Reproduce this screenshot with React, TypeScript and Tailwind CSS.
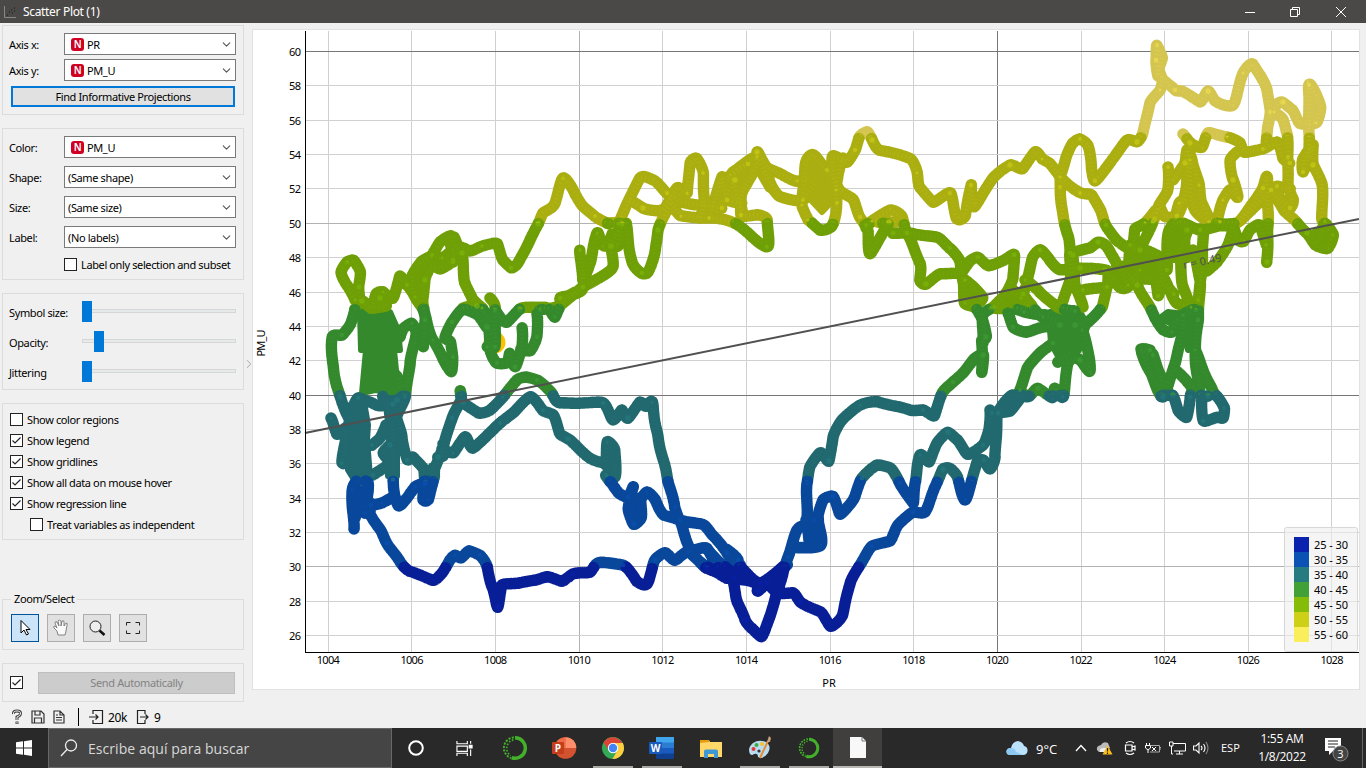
import React from "react";
import { ChevronDown, ChevronRight } from "lucide-react";

const X = (v: number) => 328.3 + (v - 1004) * 41.82;
const Y = (v: number) => 51.5 + (60 - v) * 17.18;

const BANDS = [
  { top: 60, fill: "#d3c550", light: "#f3e24f" },
  { top: 55, fill: "#aaae10", light: "#cdd016" },
  { top: 50, fill: "#6f9f06", light: "#7fb80a" },
  { top: 45, fill: "#35892d", light: "#3f9f36" },
  { top: 40, fill: "#21696e", light: "#257b80" },
  { top: 35, fill: "#08479a", light: "#0a52b4" },
  { top: 30, fill: "#081e96", light: "#0a22ae" },
];

const LEGEND = [
  ["25 - 30", "#0a22ae"],
  ["30 - 35", "#0a52b4"],
  ["35 - 40", "#257b80"],
  ["40 - 45", "#41a036"],
  ["45 - 50", "#84bc08"],
  ["50 - 55", "#cdd016"],
  ["55 - 60", "#fbee5c"],
];

const TRACKS = [
  "355,300 347,285 341,272 347,262 354,260 360,272 359,287 360,303",
  "355,300 362,301 372,308 376,294 383,292 393,298 400,276 407,285 415,297 422,307 425,320 423,347",
  "375,308 386,306 380,298",
  "415,297 412,277 421,262 432,255 440,242 452,236 453,260 440,269 431,266 425,280 423,300 426,320 433,340 443,358 451,372 453,357 450,342 445,338 452,322 463,309 477,315 487,327",
  "431,257 442,258 458,247 470,251 482,246 497,244 503,260 511,268 518,263 530,240 538,224 543,213 554,205 563,178 575,193 583,207 595,216 608,224",
  "454,237 458,250 453,262",
  "462,253 465,283 472,298 482,308 489,327 490,350 497,363 507,363 510,353 515,367 522,347 522,328",
  "463,308 477,306 492,320 495,346 487,347",
  "490,298 495,308 495,347",
  "495,310 500,318 507,322 520,309 533,307 547,308 555,317 563,300 575,292",
  "537,314 537,337 530,351 521,349",
  "355,309 350,325 342,335 332,337 333,367 340,397 350,420",
  "331,418 337,434 347,428 342,463 350,460",
  "350,412 358,398 370,402 378,406 393,404",
  "400,337 403,329 412,323 416,333 410,363 405,397 397,417 402,437 407,460 413,457 423,468 425,483 433,468 434,478 428,500 423,500 424,484 415,487 407,498 398,506 393,480 393,420 383,396",
  "397,400 403,395 397,376",
  "393,497 382,503 372,505",
  "386,425 380,438 372,445",
  "373,475 390,463 383,453 390,445",
  "354,529 352,490 358,480 368,483 365,513",
  "355,518 361,495 371,505 370,513 380,530 387,543 400,562 410,571 433,580 442,573 450,560 455,555 461,558 469,551 480,555 487,567 492,587 498,607 502,585 520,583 535,580 547,577 562,581 573,574 590,572 598,563 623,565 637,581 647,584 655,560 665,553 675,560 688,552 707,567 727,578",
  "425,484 433,473 443,447 452,418 461,400 460,391 463,402 478,413 490,410 503,397 517,380 527,377 537,380 552,393 560,403 603,403 613,420 622,410 628,418 640,402 646,406 652,402 657,433 668,480 675,507 682,527 692,553 707,568 727,577 757,583 758,591 773,577 787,565",
  "442,449 453,453 465,437 473,448 500,423 513,413 530,397 543,410 553,415 560,433 568,439 593,460 606,462 607,442 615,450 615,477 606,475 610,482 618,492 628,497 633,487 628,510 634,524 641,518 641,500 647,492 655,500 664,515 680,520 703,525 713,535 727,553 740,565",
  "443,444 443,456 438,457",
  "688,552 707,548 717,567 735,577 725,567 708,551",
  "726,549 738,560 742,578 757,583",
  "732,577 737,600 745,620 752,628 761,637 767,625 777,593 783,573 788,557 797,530 803,526",
  "767,583 777,593 793,593 800,602 820,612 831,626 842,616 850,583 860,565 872,546 890,541 898,525 913,512 925,512 935,487 943,469 950,468 957,477 965,500 972,480 977,462 984,460 990,469 995,457 998,413 1012,395 1028,397 1038,388 1052,398 1055,388 1063,397 1068,360",
  "735,562 760,583 785,565",
  "990,410 989,430 983,445 968,454 957,440 948,432 937,443 929,462 920,455 915,483 913,503 900,483 890,468 877,465 862,478 853,500 840,514 833,496 823,500 818,517 821,545 797,548",
  "992,413 1010,411 1023,394",
  "807,517 807,483 810,467 820,453 829,461 833,437 842,420 860,405 878,402 910,410 923,410 934,416 942,393 953,382 963,373 975,358 983,355 982,372 982,340",
  "806,520 810,543 814,520 820,545",
  "1020,390 1028,367 1040,353 1053,343",
  "983,340 986,337 983,320 975,308 965,303 963,283 960,262 950,248 938,238 915,234 893,233",
  "983,343 983,315 992,308",
  "808,220 820,230 832,226 837,203 832,157 847,162 855,150 860,136 867,132 872,140 880,150 910,158 917,173 920,187 933,202 950,193 957,219 965,216 971,185 974,207 993,178 1010,165 1022,169 1035,152 1042,159 1050,163 1060,177 1080,193 1092,195 1100,210 1106,225 1115,239 1127,247 1140,250",
  "808,220 802,205 806,162 813,155 827,170 840,190 853,200 860,217 868,232 870,254 889,222",
  "843,158 840,165 836,190",
  "866,225 890,210 902,217 907,233 920,263 920,280 926,284 940,274 960,273",
  "866,228 872,221 883,223 896,222",
  "962,272 970,261 978,257 988,266 1004,260 1014,255 1013,278 1005,295 993,308 1007,308 1030,308 1021,298 1010,290",
  "965,280 983,297 975,305",
  "1008,313 1013,327 1027,332 1043,327 1060,325",
  "1020,303 1033,308 1043,317 1058,320",
  "540,310 553,308 563,303 583,287 601,277 613,267 611,246 620,230 603,245 597,233 590,263 583,280 580,250",
  "563,303 560,298 582,290 583,260",
  "604,246 618,246 622,224 608,223",
  "618,224 640,178 653,180 667,193 680,202 700,205 722,208",
  "630,200 643,208 663,210 677,188 687,193 690,163 697,158 703,173 704,205 700,218",
  "626,223 632,263 642,273 648,272 655,253 658,230 667,210 671,202 681,216 710,218 733,222 767,247 767,220 757,215 741,215 742,193 757,165 757,152 767,167 780,174 797,181 810,178",
  "709,218 715,200 722,177 727,200 742,203",
  "717,212 735,180 728,178 740,167 757,157 770,182 780,197 803,200 815,182",
  "742,210 731,175 748,164",
  "1105,270 1120,287 1128,287 1140,270",
  "1060,177 1060,187 1063,217 1068,235 1070,253 1070,280 1060,308",
  "1083,307 1075,283 1073,255",
  "1060,177 1066,158 1072,144 1080,139 1088,145 1092,170 1095,181 1107,167 1127,140 1137,142 1143,133 1150,103 1160,90 1162,78 1156,60 1157,45 1162,58 1158,74 1175,90 1183,91 1200,102 1208,91 1215,101 1233,105 1243,73 1253,64 1267,90 1270,112 1268,127 1266,142",
  "1157,46 1156,60 1158,76",
  "1270,115 1277,104 1283,102 1292,110 1300,123 1316,123 1321,107 1316,95 1309,85 1309,140 1309,155 1303,172 1303,159 1313,145 1313,165 1322,183 1322,220",
  "1274,112 1283,120 1287,133 1288,157 1288,183 1293,200 1290,208 1279,196",
  "1183,134 1190,143 1202,147 1208,133 1227,137 1240,143 1245,152 1263,149 1277,142 1283,158 1290,163",
  "1237,152 1230,160 1233,180 1238,197 1230,190 1223,200 1216,224",
  "1168,167 1168,190 1159,205 1153,222 1143,243",
  "1173,180 1185,163 1187,150 1192,160 1199,185 1202,203 1209,218 1220,222",
  "1190,143 1185,195 1177,216 1165,216 1159,207 1154,220",
  "1190,160 1190,197 1196,211 1209,222 1237,223 1253,203 1263,188 1267,177 1268,227 1267,262",
  "1186,200 1179,203 1175,220",
  "1240,221 1270,192 1277,186 1290,189",
  "1271,190 1285,211 1297,223 1307,233 1315,245 1328,248 1333,235 1325,223 1317,243",
  "1012,308 1024,312 1045,315",
  "1027,280 1033,257 1040,250 1050,260 1060,270 1080,268 1107,270",
  "1025,280 1040,292 1057,307 1075,311",
  "1027,285 1023,294 1032,305",
  "1078,251 1090,248 1098,242 1105,245 1120,268 1128,285",
  "1083,290 1107,287",
  "1108,275 1107,287 1102,307 1088,322 1075,325",
  "1133,245 1135,229 1145,223 1155,211",
  "1130,245 1157,255 1162,276 1158,296 1155,280 1130,280",
  "1128,275 1137,285 1150,308 1163,330 1172,332 1178,318",
  "1163,277 1177,303 1196,310",
  "1167,270 1168,233 1176,222 1187,230 1180,253 1183,287 1191,307",
  "1160,281 1174,294",
  "1193,250 1200,280 1198,320 1195,353 1200,393 1208,396",
  "1200,229 1203,233 1202,270 1198,300",
  "1180,222 1200,230 1220,226 1233,227 1227,247 1217,262 1207,271",
  "1233,227 1238,240 1244,241 1250,230 1260,225 1266,245",
  "1150,350 1141,350 1150,372 1163,397 1175,363 1183,330 1183,315 1192,310",
  "1141,349 1153,355 1160,375 1163,385",
  "1175,370 1192,387 1190,397 1187,417 1178,411 1173,395 1161,397",
  "1195,350 1212,390 1219,398 1224,408 1223,418 1217,417 1203,421 1202,397",
  "1067,357 1080,360 1090,371 1087,345 1082,330",
  "1072,350 1058,362",
];

const MASSES = [
  "360,312 370,306 390,312 398,330 400,350 394,350 396,370 405,393 394,393 375,390 362,393 366,350 361,350",
  "356,398 364,402 368,425 367,440 370,476 353,478 348,470 348,440 346,424 350,408",
  "385,398 398,398 397,425 397,476 388,476 389,430",
  "354,484 371,486 369,510 352,508",
  "1050,312 1080,312 1088,325 1079,350 1070,365 1060,360 1051,343 1050,330",
  "1127,249 1148,249 1158,275 1125,278",
  "1168,228 1187,228 1188,260 1169,260",
  "1180,312 1199,312 1199,325 1188,350 1179,320",
  "806,160 818,155 829,170 838,195 822,212 806,195",
  "1007,287 1015,288 1030,305 1000,306",
  "730,175 750,164 769,175 778,195 768,189 757,170 745,187 735,182",
  "610,232 622,230 623,245 605,245",
  "1160,318 1168,312 1176,313 1174,325",
  "808,515 821,518 822,545 808,543",
  "628,495 642,496 642,520 630,520",
  "1316,230 1328,228 1332,236 1328,246 1316,243",
  "447,242 458,242 460,254 452,260",
  "605,446 614,450 614,476 603,466",
  "966,280 984,298 983,303 968,303",
  "1187,152 1194,165 1199,200 1190,200",
  "1114,266 1145,258 1140,280 1122,286",
  "1316,230 1320,240 1310,236",
  "1157,46 1162,58 1157,66 1154,58",
  "1313,92 1318,97 1317,118 1310,120",
  "412,280 421,268 424,282 420,298",
];

const RAW = TRACKS.map((t) => t.split(" ").map((p) => p.split(",").map(Number)));

// Samples a Catmull-Rom spline through the knots at roughly even spacing.
function sample(pts: number[][]): number[][] {
  const out: number[][] = [];
  for (let i = 0; i < pts.length - 1; i++) {
    const a = pts[Math.max(0, i - 1)];
    const b = pts[i];
    const c = pts[i + 1];
    const d = pts[Math.min(pts.length - 1, i + 2)];
    const len = Math.hypot(c[0] - b[0], c[1] - b[1]);
    const n = Math.max(1, Math.round(len / 1.6));
    const s = 0.3;
    for (let k = 0; k <= n; k++) {
      const t = k / n;
      const t2 = t * t;
      const t3 = t2 * t;
      const at = (j: number) =>
        (2 * t3 - 3 * t2 + 1) * b[j] + (t3 - 2 * t2 + t) * s * (c[j] - a[j]) + (-2 * t3 + 3 * t2) * c[j] + (t3 - t2) * s * (d[j] - b[j]);
      const wob = Math.sin(out.length * 0.31) * 0.35;
      out.push([at(0) + wob, at(1) - wob]);
    }
  }
  return out;
}

const SAMPLES = RAW.flatMap(sample);
const bandOf = (y: number) => Math.min(BANDS.length - 1, Math.max(0, Math.floor((y - Y(60)) / (Y(55) - Y(60)))));
const DOTS = BANDS.map((_, i) =>
  SAMPLES.filter((p) => bandOf(p[1]) === i).map((p) => `M${p[0].toFixed(1)} ${p[1].toFixed(1)}h.01`).join("")
);
const NODES = RAW.flatMap((t, ti) => t.filter((_, i) => (ti + i * 2) % 3 === 0));

function Stops({ tone }: { tone: "fill" | "light" }) {
  return (
    <>
      {BANDS.flatMap((b, i) => {
        const a = i === 0 ? 0 : Y(b.top) / 768;
        const e = i === BANDS.length - 1 ? 1 : Y(b.top - 5) / 768;
        return [
          <stop key={b.top + "a"} offset={a} stopColor={b[tone]} />,
          <stop key={b.top + "e"} offset={e} stopColor={b[tone]} />,
        ];
      })}
    </>
  );
}

function Chart() {
  const xs = Array.from({ length: 13 }, (_, i) => 1004 + i * 2);
  const ys = Array.from({ length: 18 }, (_, i) => 26 + i * 2);
  const font = "font-['Noto_Sans',sans-serif] text-[11px]";
  return (
    <svg viewBox="252 29 1108 661" className="block h-[661px] w-[1108px]">
      <defs>
        <linearGradient id="tone" gradientUnits="userSpaceOnUse" x1="0" y1="0" x2="0" y2="768"><Stops tone="fill" /></linearGradient>
        <linearGradient id="glow" gradientUnits="userSpaceOnUse" x1="0" y1="0" x2="0" y2="768"><Stops tone="light" /></linearGradient>
      </defs>
      <g shapeRendering="crispEdges" strokeWidth="1">
        {xs.map((v) => (
          <line key={v} x1={Math.floor(X(v)) + 0.5} x2={Math.floor(X(v)) + 0.5} y1="31" y2="652" stroke={v === 1020 ? "#777" : v === 1010 ? "#b2b2b2" : "#d0d0d0"} />
        ))}
        {ys.map((v) => (
          <line key={v} x1="306" x2="1359" y1={Math.floor(Y(v)) + 0.5} y2={Math.floor(Y(v)) + 0.5} stroke={v === 60 || v === 40 ? "#777" : v % 10 === 0 ? "#b2b2b2" : "#d0d0d0"} />
        ))}
      </g>
      <circle cx="494.500" cy="342.500" r="11" fill="#ffc000" />
      <g fill="url(#tone)" stroke="url(#tone)" strokeWidth="6" strokeLinejoin="round">
        {MASSES.map((t) => <polygon key={t} points={t} />)}
      </g>
      <g fill="none" strokeWidth="11.600" strokeLinecap="round">
        {DOTS.map((d, i) => <path key={i} d={d} stroke={BANDS[i].fill} />)}
      </g>
      <g fill="none" stroke="url(#glow)" strokeWidth="4" strokeDasharray="0.7 3.3" opacity="0.3">
        {TRACKS.map((t) => <polyline key={t} points={t} />)}
      </g>
      <g fill="url(#glow)" opacity="0.6">
        {NODES.map((n, i) => <circle key={i} cx={n[0]} cy={n[1]} r={1.5 + (i % 4) * 0.4} />)}
      </g>
      <line x1="305" y1="433" x2="1359" y2="219" stroke="#505050" strokeWidth="2" />
      <text x="1184" y="269" transform="rotate(-11.5 1184 269)" fill="#505050" className={font} textLength="39">r = 0.49</text>
      <path d="M305.5 31V652.500H1359" fill="none" stroke="#000" shapeRendering="crispEdges" />
      {xs.map((v) => <text key={v} x={X(v)} y="664" textAnchor="middle" textLength="23" className={font}>{v}</text>)}
      {ys.map((v) => <text key={v} x="301" y={Y(v) + 4.5} textAnchor="end" textLength="12" className={font}>{v}</text>)}
      <text x="829" y="687" textAnchor="middle" className={font}>PR</text>
      <text x="0" y="0" transform="translate(265 343) rotate(-90)" textAnchor="middle" textLength="27" className={font}>PM_U</text>
      <rect x="1284.500" y="527.500" width="73" height="124" rx="2" fill="#eeeeee" fillOpacity=".6" stroke="#d8d8d8" />
      {LEGEND.map(([label, color], i) => (
        <g key={label}>
          <rect x="1294" y={537 + i * 15} width="15" height="15" fill={color} />
          <text x="1314" y={549 + i * 15} textLength="34" className={font}>{label}</text>
        </g>
      ))}
    </svg>
  );
}

function Txt({ w, children }: { w: string; children: React.ReactNode }) {
  return <span className={"shrink-0 whitespace-nowrap " + w}>{children}</span>;
}

function Combo({ label, value, numeric = false }: { label: string; value: string; numeric?: boolean }) {
  return (
    <div className="flex h-[22px] items-center">
      <Txt w="w-[55px] pt-px">{label}</Txt>
      <div className="flex h-[22px] w-[172px] items-center border border-[#7a7a7a] bg-white pl-[3px] pr-[2px]">
        {numeric && <span className="mr-[3px] ml-[3px] flex h-[13px] w-[13px] items-center justify-center rounded-[3px] bg-[#cf0022] text-[10px] font-semibold text-white">N</span>}
        <span className="flex-1 whitespace-nowrap pt-px">{value}</span>
        <ChevronDown size={13} strokeWidth={2} color="#555" />
      </div>
    </div>
  );
}

function Box({ on = false }: { on?: boolean }) {
  return (
    <span className="flex h-[13px] w-[13px] shrink-0 border border-[#222] bg-white">
      {on && <svg viewBox="0 0 11 11" className="h-[11px] w-[11px]"><path d="M1.500 5.500L4 8L9.500 2.500" fill="none" stroke="#222" strokeWidth="1.2" /></svg>}
    </span>
  );
}

function Check({ label, on = false }: { label: string; on?: boolean }) {
  return <div className="flex h-[21px] items-center gap-1"><Box on={on} /><span className="whitespace-nowrap">{label}</span></div>;
}

function Slider({ label, shift }: { label: string; shift: string }) {
  return (
    <div className="flex h-[30px] items-start">
      <Txt w="w-[73px] pt-[5px]">{label}</Txt>
      <div className="grid w-[154px] items-center">
        <div className="col-start-1 row-start-1 -mt-[1px] h-[4px] border border-[#d6d6d6] bg-[#e7eaea]" />
        <div className={"col-start-1 row-start-1 h-[21px] w-[10px] bg-[#0078d7] " + shift} />
      </div>
    </div>
  );
}

const GROUP = "w-[242px] border border-[#dcdcdc] pl-[6px]";
const TOOL = "flex h-[28px] w-[28px] items-center justify-center border";

function Sidebar() {
  return (
    <aside className="flex w-[246px] shrink-0 flex-col pl-[2px] pt-[2px] tracking-[-0.38px]">
      <section className={GROUP + " flex h-[90px] flex-col gap-1 pt-[7px]"}>
        <Combo label="Axis x:" value="PR" numeric />
        <Combo label="Axis y:" value="PM_U" numeric />
        <button className="ml-[2px] mt-px flex h-[21px] w-[224px] items-center justify-center border-2 border-[#0078d7] bg-[#e1e1e1] tracking-[-0.38px]">Find Informative Projections</button>
      </section>
      <section className={GROUP + " mt-[13px] flex h-[152px] flex-col gap-2 pt-[7px]"}>
        <Combo label="Color:" value="PM_U" numeric />
        <Combo label="Shape:" value="(Same shape)" />
        <Combo label="Size:" value="(Same size)" />
        <Combo label="Label:" value="(No labels)" />
        <div className="-mt-[2px] pl-[55px]"><Check label="Label only selection and subset" /></div>
      </section>
      <section className={GROUP + " mt-[13px] h-[97px] pt-[7px]"}>
        <Slider label="Symbol size:" shift="ml-0" />
        <Slider label="Opacity:" shift="ml-[12px]" />
        <Slider label="Jittering" shift="ml-0" />
      </section>
      <section className={GROUP + " mt-[13px] h-[137px] pl-[7px] pt-[5px]"}>
        <Check label="Show color regions" />
        <Check label="Show legend" on />
        <Check label="Show gridlines" on />
        <Check label="Show all data on mouse hover" on />
        <Check label="Show regression line" on />
        <div className="pl-5"><Check label="Treat variables as independent" /></div>
      </section>
      <fieldset className="mt-[51px] h-[59px] w-[242px] border border-[#dcdcdc] pl-[8px]">
        <legend className="px-[3px] leading-[16px]">Zoom/Select</legend>
        <div className="flex gap-2 pt-[7px]">
          <div className={TOOL + " border-[#005499] bg-[#cce4f7]"}>
            <svg viewBox="0 0 16 18" className="h-[18px] w-[16px]"><path d="M4 1.500V14L7 11L9.500 16L11.500 15L9 10.500H13Z" fill="white" stroke="black" /></svg>
          </div>
          <div className={TOOL + " border-[#adadad] bg-[#e1e1e1]"}>
            <svg viewBox="0 0 18 18" className="h-[18px] w-[18px]"><path d="M6 16L5 12L2 9Q1 7 3 7L5 9L3 4Q3 2 5 3L7 7L6 2Q7 0 9 2V7L10 2Q12 1 12 3V7L14 4Q16 4 15 6L14 12L13 16Z" fill="#fafafa" stroke="#777" strokeWidth=".9" /></svg>
          </div>
          <div className={TOOL + " border-[#adadad] bg-[#e1e1e1]"}>
            <svg viewBox="0 0 18 18" className="h-[18px] w-[18px]"><circle cx="7.500" cy="7.500" r="5.500" fill="#eee" stroke="#222" /><path d="M11.500 11.500L16.500 16" stroke="#111" strokeWidth="2.500" /></svg>
          </div>
          <div className={TOOL + " border-[#adadad] bg-[#e1e1e1]"}>
            <svg viewBox="0 0 16 14" className="h-[14px] w-[16px]"><path d="M1.500 4.500V1.500H5.500M10.500 1.500H14.500V4.500M14.500 9.500V12.500H10.500M5.500 12.500H1.500V9.500" fill="none" stroke="#222" /></svg>
          </div>
        </div>
      </fieldset>
      <section className={GROUP + " mt-[13px] flex h-[39px] items-center pl-[7px]"}>
        <Box on />
        <div className="ml-[15px] flex h-[22px] w-[197px] items-center justify-center border border-[#bfbfbf] bg-[#cccccc] pt-px text-[#838383]">Send Automatically</div>
      </section>
      <div className="flex h-[26px] items-center pl-[9px] pt-[4px]">
        <svg viewBox="0 0 12 16" className="h-[16px] w-[12px]" fill="none"><path d="M2.500 5Q2 2 6 2Q10 2 9.500 5Q9 7 6 8V11M6 12.500V15" stroke="#444" strokeWidth="3" /><path d="M2.500 5Q2 2 6 2Q10 2 9.500 5Q9 7 6 8V11M6 13V14.500" stroke="#eee" strokeWidth="1" /></svg>
        <svg viewBox="0 0 14 14" className="ml-[8px] h-[14px] w-[14px]" fill="none" stroke="#333" strokeWidth="1.2"><path d="M1 1H10L13 4V13H1ZM4 1V5H9V1M3.500 13V8H10.500V13" /></svg>
        <svg viewBox="0 0 12 14" className="ml-[8px] h-[14px] w-[12px]" fill="none" stroke="#333" strokeWidth="1.2"><path d="M1 1H7L11 5V13H1ZM7 1V5H11M3 5H5M3 7.500H9M3 10H9" /></svg>
        <span className="ml-[13px] h-[18px] w-px bg-black" />
        <svg viewBox="0 0 15 16" className="ml-[10px] h-[16px] w-[15px]" fill="none" stroke="#222" strokeWidth="1.2"><path d="M4 5V1.500H13.500V14.500H4V11M0 8H9M6.500 5.500L9 8L6.500 10.500" /></svg>
        <span className="ml-[4px] w-[20px] whitespace-nowrap pt-px text-[12px]">20k</span>
        <svg viewBox="0 0 14 16" className="ml-[8px] h-[16px] w-[14px]" fill="none" stroke="#222" strokeWidth="1.2"><path d="M9 5V1.500H1.500V14.500H9V11M4 8H12M9.500 5.500L12 8L9.500 10.500" /></svg>
        <span className="ml-[4px] pt-px text-[12px]">9</span>
      </div>
    </aside>
  );
}

function Ring({ size }: { size: string }) {
  return (
    <svg viewBox="0 0 24 24" className={size} fill="none" stroke="#43b02a">
      <path d="M12 2.500A9.500 9.500 0 1 1 9 21" strokeWidth="3.200" />
      <path d="M11 2.200A9.800 9.800 0 0 0 8.500 21.300" strokeWidth="1.800" strokeDasharray="2 1.200" />
      <path d="M10.500 4.500A8 8 0 0 0 8 19" strokeWidth="1.500" strokeDasharray="1.500 1.500" />
    </svg>
  );
}

function TaskIcon({ w = "w-[49px]", bar = "", children }: { w?: string; bar?: string; children: React.ReactNode }) {
  return (
    <div className={"flex h-[40px] shrink-0 flex-col items-center " + w}>
      <div className="flex h-[38px] items-center justify-center pt-[2px]">{children}</div>
      <div className={"h-[2px] w-[40px] " + bar} />
    </div>
  );
}

function Taskbar() {
  const on = "bg-[#aaa8a5]";
  return (
    <footer className="flex h-[40px] items-center bg-[#292929] font-['Open_Sans','Noto_Sans',sans-serif] text-[12px] text-white">
      <div className="flex w-[48px] justify-center">
        <svg viewBox="0 0 16 16" className="h-[16px] w-[16px]" fill="white"><path d="M0 2.300L7 1.300V7.500H0ZM8 1.200L16 0V7.500H8ZM0 8.500H7V14.700L0 13.700ZM8 8.500H16V16L8 14.800Z" /></svg>
      </div>
      <div className="flex h-[40px] w-[344px] items-center border border-[#686868] bg-[#454545] pl-[11px]">
        <svg viewBox="0 0 18 18" className="h-[18px] w-[18px]" fill="none" stroke="#eee" strokeWidth="1.300"><circle cx="11" cy="6.500" r="5.500" /><path d="M7 10.500L1 17" /></svg>
        <span className="ml-[10px] pt-px text-[14px] tracking-[0.05px] text-[#d8d8d8]">Escribe aquí para buscar</span>
      </div>
      <TaskIcon w="w-[48px]"><svg viewBox="0 0 16 16" className="h-[16px] w-[16px]"><circle cx="8" cy="8" r="6.800" fill="none" stroke="white" strokeWidth="2" /></svg></TaskIcon>
      <TaskIcon w="w-[48px]"><svg viewBox="0 0 18 18" className="h-[17px] w-[17px]" fill="none" stroke="white" strokeWidth="1.200"><path d="M1 1V4H12V1M1 17V14H12V17M1 6.500H12V12H1ZM15.500 1V4M15.500 10V17" /><path d="M14 5.500H17V8.500H14Z" fill="white" /></svg></TaskIcon>
      <TaskIcon w="w-[53px]"><Ring size="h-[26px] w-[26px]" /></TaskIcon>
      <TaskIcon w="w-[47px]">
        <svg viewBox="0 0 26 24" className="-ml-[2px] h-[24px] w-[26px]"><circle cx="14.500" cy="12" r="10.800" fill="#d35230" /><path d="M14.500 1.200A10.800 10.800 0 0 0 3.700 12H14.500Z" fill="#ed6c47" /><path d="M14.500 1.200A10.800 10.800 0 0 1 25.300 12H14.500Z" fill="#ff8f6b" /><rect x="1" y="6" width="12" height="12" rx="1" fill="#c43e1c" /><text x="7" y="15.500" textAnchor="middle" fill="white" className="text-[10px] font-bold">P</text></svg>
      </TaskIcon>
      <TaskIcon bar={on}>
        <svg viewBox="0 0 24 24" className="h-[24px] w-[24px]"><circle cx="12" cy="12" r="11" fill="#34a853" /><path d="M12 7H21.800A11 11 0 0 1 11.500 23L16.300 14.500Z" fill="#ffcd40" /><path d="M2.500 6.500L7.700 14.500L12 7H21.500A11 11 0 0 0 2.500 6.500Z" fill="#db4437" /><circle cx="12" cy="12" r="5.200" fill="white" /><circle cx="12" cy="12" r="4.200" fill="#4285f4" /></svg>
      </TaskIcon>
      <TaskIcon bar={on}>
        <svg viewBox="0 0 25 22" className="h-[22px] w-[25px]"><rect x="7" width="18" height="22" rx="1" fill="#103f91" /><rect x="7" width="18" height="16.500" fill="#185abd" /><rect x="7" width="18" height="11" fill="#2b7cd3" /><rect x="7" width="18" height="5.500" fill="#41a5ee" /><rect x="0" y="5" width="13" height="12" rx="1" fill="#185abd" /><text x="6.500" y="14.700" textAnchor="middle" fill="white" className="text-[10px] font-bold">W</text></svg>
      </TaskIcon>
      <TaskIcon>
        <svg viewBox="0 0 22 19" className="h-[19px] w-[22px]"><path d="M0 1H9L10 3H22V18H0Z" fill="#ffd869" /><path d="M0 1H9V3L0 4Z" fill="#e79c0b" /><path d="M4 19V12Q4 10.500 6 10.500H16Q18 10.500 18 12V19H14V15H8V19Z" fill="#3f97d4" /></svg>
      </TaskIcon>
      <TaskIcon bar={on}>
        <svg viewBox="0 0 24 24" className="h-[24px] w-[24px]"><path d="M2 18Q-1 12 5 7Q11 3 18 6Q24 10 20 17Q15 24 10 21Q10 17 6 18Q4 20 2 18Z" fill="#b9dcf0" /><circle cx="5.500" cy="13" r="2" fill="#e23b35" /><circle cx="8.500" cy="9" r="2" fill="#43aa3b" /><circle cx="14" cy="8" r="2" fill="#f4c22b" /><circle cx="11" cy="15" r="1.600" fill="#333" /><path d="M12 22L20 5" stroke="#e58b31" strokeWidth="2" /><path d="M19 6L21 0L23 2L22 6Z" fill="#c6a27b" /></svg>
      </TaskIcon>
      <TaskIcon bar={on}><Ring size="h-[22px] w-[22px]" /></TaskIcon>
      <div className="flex h-[40px] w-[49px] flex-col bg-[#413f3d]">
        <div className="flex h-[38px] items-center justify-center"><svg viewBox="0 0 16 21" className="h-[21px] w-[16px]"><path d="M0 0H12L16 4V21H0Z" fill="#f8f8f8" /><path d="M12 0V4H16" fill="none" stroke="#777" /></svg></div>
        <div className="h-[2px] bg-[#bab8b5]" />
      </div>
      <div className="ml-auto flex h-[40px] items-center">
        <svg viewBox="0 0 22 16" className="h-[16px] w-[22px]"><path d="M5 15Q0 15 .5 11Q1 8 5 8Q6 2 12 1Q17 2 18 6Q22 7 21.500 11Q21 15 17 15Z" fill="#bce2fb" /><path d="M5 15Q0 15 .5 11Q1 8 5 8Q9 8 10 12L17 15Z" fill="#8cc9f2" /></svg>
        <span className="ml-[8px] w-[24px] whitespace-nowrap pt-px text-[13px]">9°C</span>
        <svg viewBox="0 0 12 8" className="ml-[15px] h-[8px] w-[12px]"><path d="M1 7L6 1.500L11 7" fill="none" stroke="white" strokeWidth="1.300" /></svg>
        <svg viewBox="0 0 17 14" className="ml-[9px] h-[14px] w-[17px]"><path d="M1 9Q0 5 5 4Q7 0 12 2L14 7L6 11H3Z" fill="#bbb" /><path d="M4 11Q3 7 8 7H13L14 11Z" fill="#eee" /><path d="M11.500 4.500L16.500 13.500H6.500Z" fill="#fcbf18" /><path d="M11.500 7V10.500M11.500 11.500V13" stroke="#222" strokeWidth="1.200" /></svg>
        <svg viewBox="0 0 14 16" className="ml-[10px] h-[16px] w-[14px]" fill="none" stroke="white" strokeWidth="1.200"><path d="M3 3Q7 0 11 3M3 13Q7 16 11 13M2.500 5H9V11H2.500ZM9 7L12 6V10L9 9" /></svg>
        <svg viewBox="0 0 16 14" className="ml-[8px] h-[14px] w-[16px]" fill="none" stroke="white"><path d="M1.500 2V4M4.500 2V4M.5 4.500H5.500V7L3 9L.5 7ZM3 9V12M7 6L11 10M11 6L7 10" /><path d="M6 4.500H14.500V11H5M14.500 6.500H16V9" stroke="#aaa" /></svg>
        <svg viewBox="0 0 17 14" className="ml-[8px] h-[14px] w-[17px]" fill="none" stroke="white"><path d="M4 2.500H16.500V10H5M10.500 10V13M7 13H14M.5 1H4V5H.5ZM2.500 5V13H4" /></svg>
        <svg viewBox="0 0 16 14" className="ml-[7px] h-[14px] w-[16px]" fill="none" stroke="white" strokeWidth="1.100"><path d="M.5 5H3L6 2V12L3 9H.5ZM8 5Q10 7 8 9M10.500 3Q13.500 7 10.500 11" /><path d="M13 1Q17 7 13 13" stroke="#888" /></svg>
        <span className="ml-[12px] w-[20px] whitespace-nowrap text-[11px] font-normal">ESP</span>
        <div className="ml-[17px] flex w-[48px] flex-col items-center whitespace-nowrap text-[12px] leading-[18px] tracking-[-0.300px]"><span>1:55 AM</span><span>1/8/2022</span></div>
        <div className="flex h-[40px] w-[56px] items-center pl-[17px] pt-[4px]">
          <svg viewBox="0 0 28 26" className="h-[26px] w-[28px]"><path d="M2 1H18V14H10L6 18V14H2Z" fill="white" /><path d="M5 4H15M5 7H15M5 10H12" stroke="#222" /><circle cx="17.500" cy="16.500" r="7.500" fill="#444" stroke="#888" /><text x="17.500" y="20.500" textAnchor="middle" fill="white" className="text-[11px]">3</text></svg>
        </div>
        <span className="mr-[3px] h-[40px] w-px bg-[#666]" />
      </div>
    </footer>
  );
}

export default function App() {
  return (
    <div className="flex h-[768px] w-[1366px] flex-col overflow-hidden bg-[#f0f0f0] font-['Noto_Sans',sans-serif] text-[11px] leading-[14px] text-black">
      <header className="flex h-[23px] shrink-0 items-center bg-[#4b4947] text-white">
        <svg viewBox="0 0 12 12" className="ml-[4px] h-[12px] w-[12px]"><path d="M.5 0V11.500H12" fill="none" stroke="#888" /><path d="M3 9H4M5 6H6M8 7H9M7 4H8M10 2H11M10 5H11" stroke="#292929" strokeWidth="1.500" /></svg>
        <span className="ml-[7px] flex-1 text-[12px] tracking-[-0.330px]">Scatter Plot (1)</span>
        <svg viewBox="0 0 104 12" className="mr-[18px] h-[12px] w-[104px]" fill="none" stroke="white"><path d="M1 6.500H11M46.500 3.500H53.500V10.500H46.500ZM48.500 3V1.500H55.500V8.500H54M92 1L102 11M102 1L92 11" /></svg>
      </header>
      <main className="flex h-[705px] shrink-0">
        <Sidebar />
        <div className="flex w-[6px] items-center justify-center"><ChevronRight size={14} className="-ml-px mb-[24px] shrink-0" color="#999" strokeWidth={1.500} /></div>
        <section className="mt-[6px] h-[661px] w-[1108px] bg-white outline outline-1 -outline-offset-1 outline-[#e2e2e2]"><Chart /></section>
      </main>
      <Taskbar />
    </div>
  );
}
